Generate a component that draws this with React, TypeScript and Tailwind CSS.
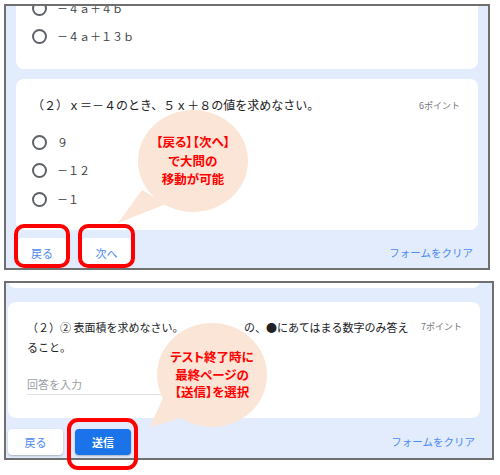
import React from "react";

function Radio() {
  return <span className="inline-block w-[15px] h-[15px] rounded-full border-2 border-[#5f6368] shrink-0" />;
}

function Option({ label }: { label: string }) {
  return (
    <div className="flex items-center gap-[10px] h-[28.5px]">
      <Radio />
      <span className="text-[11px] text-[#3c4043] leading-none">{label}</span>
    </div>
  );
}

export default function App() {
  return (
    <div className="relative w-[500px] h-[475px] bg-white overflow-hidden font-['Noto_Sans_CJK_JP','Noto_Sans',sans-serif]">
      {/* Top screenshot */}
      <div className="ml-[4px] mt-[4px] w-[486px] h-[266px] border-2 border-[#6f6f6f] bg-[#e3ecfc] overflow-hidden flex flex-col px-[10px]">
        <div className="-mt-[20px] h-[83px] shrink-0 bg-white rounded-lg pt-[8px] px-4">
          <Option label="－４ａ＋４ｂ" />
          <Option label="－４ａ＋１３ｂ" />
        </div>
        <div className="mt-[10px] h-[151px] shrink-0 bg-white rounded-lg pl-4 pr-[18px] pt-[17px]">
          <div className="flex items-center justify-between h-[18px]">
            <span className="text-[12px] text-[#202124] leading-none">（２）ｘ＝－４のとき、５ｘ＋８の値を求めなさい。</span>
            <span className="text-[9px] text-[#70757a] leading-none whitespace-nowrap">6ポイント</span>
          </div>
          <div className="mt-[14px]">
            <Option label="９" />
            <Option label="－１２" />
            <Option label="－１" />
          </div>
        </div>
        <div className="mt-[8px] flex items-start pl-[2px] pr-[5px]">
          <div className="w-[48px] h-[30px] bg-white rounded flex items-center justify-center text-[11px] text-[#4a8af4]">戻る</div>
          <div className="ml-[16px] w-[49px] h-[30px] bg-white rounded flex items-center justify-center text-[11px] text-[#4a8af4]">次へ</div>
          <div className="ml-auto h-[30px] flex items-center text-[10.5px] text-[#4a8af4]">フォームをクリア</div>
        </div>
      </div>

      {/* Bottom screenshot */}
      <div className="ml-[4px] mt-[11px] w-[490px] h-[179px] border-2 border-[#6f6f6f] bg-[#e3ecfc] overflow-hidden flex flex-col pl-[2px] pr-[12px]">
        <div className="-mt-[10px] h-[15px] shrink-0 bg-white rounded-lg" />
        <div className="mt-[14px] h-[116px] shrink-0 bg-white rounded-lg pl-[19px] pr-[18px] pt-[15px]">
          <div className="flex items-start justify-between gap-2">
            <p className="text-[11px] leading-[20px] text-[#202124] whitespace-nowrap">
              （２）② 表面積を求めなさい。　　　　　　の、●にあてはまる数字のみ答え
              <br />
              ること。
            </p>
            <span className="text-[9px] text-[#70757a] leading-[20px] whitespace-nowrap shrink-0">7ポイント</span>
          </div>
          <div className="mt-[17px] w-[215px] h-[21px] border-b border-[#e0e0e0] text-[11px] text-[#9aa0a6] leading-[20px]">回答を入力</div>
        </div>
        <div className="mt-[11px] flex items-center pr-[5px]">
          <div className="w-[55px] h-[26px] bg-white rounded shadow-[0_1px_2px_rgba(0,0,0,0.25)] flex items-center justify-center text-[11px] text-[#4a8af4]">戻る</div>
          <div className="ml-[12px] w-[56px] h-[26px] bg-[#1a73e8] rounded shadow-[0_1px_2px_rgba(0,0,0,0.25)] flex items-center justify-center text-[11px] font-bold text-white">送信</div>
          <div className="ml-auto text-[10.5px] text-[#4a8af4]">フォームをクリア</div>
        </div>
      </div>

      {/* Annotations: speech bubbles */}
      <svg className="absolute left-0 top-0 pointer-events-none" width="500" height="475" viewBox="0 0 500 475">
        <ellipse cx="193" cy="161" rx="55" ry="51" fill="#fbe5d6" />
        <polygon points="142,190 118,223 166,204" fill="#fbe5d6" />
        <ellipse cx="212" cy="375" rx="55" ry="52" fill="#fbe5d6" />
        <polygon points="163,398 150,427 184,417" fill="#fbe5d6" />
      </svg>
      <div className="absolute left-[138px] top-[133px] w-[110px] flex flex-col items-center text-[12.5px] font-bold leading-[18.5px] text-[#ff0000] [font-feature-settings:'palt']">
        <span>【戻る】【次へ】</span>
        <span>で大問の</span>
        <span>移動が可能</span>
      </div>
      <div className="absolute left-[157px] top-[348px] w-[110px] flex flex-col items-center text-[12.5px] font-bold leading-[17.5px] text-[#ff0000] [font-feature-settings:'palt']">
        <span>テスト終了時に</span>
        <span>最終ページの</span>
        <span>【送信】を選択</span>
      </div>

      {/* Annotations: red boxes */}
      <div className="absolute left-[14px] top-[224px] w-[56px] h-[44px] border-4 border-[#ff0000] rounded-[10px]" />
      <div className="absolute left-[78px] top-[224px] w-[57px] h-[44px] border-4 border-[#ff0000] rounded-[10px]" />
      <div className="absolute left-[67px] top-[418px] w-[71px] h-[52px] border-4 border-[#ff0000] rounded-[11px]" />
    </div>
  );
}
